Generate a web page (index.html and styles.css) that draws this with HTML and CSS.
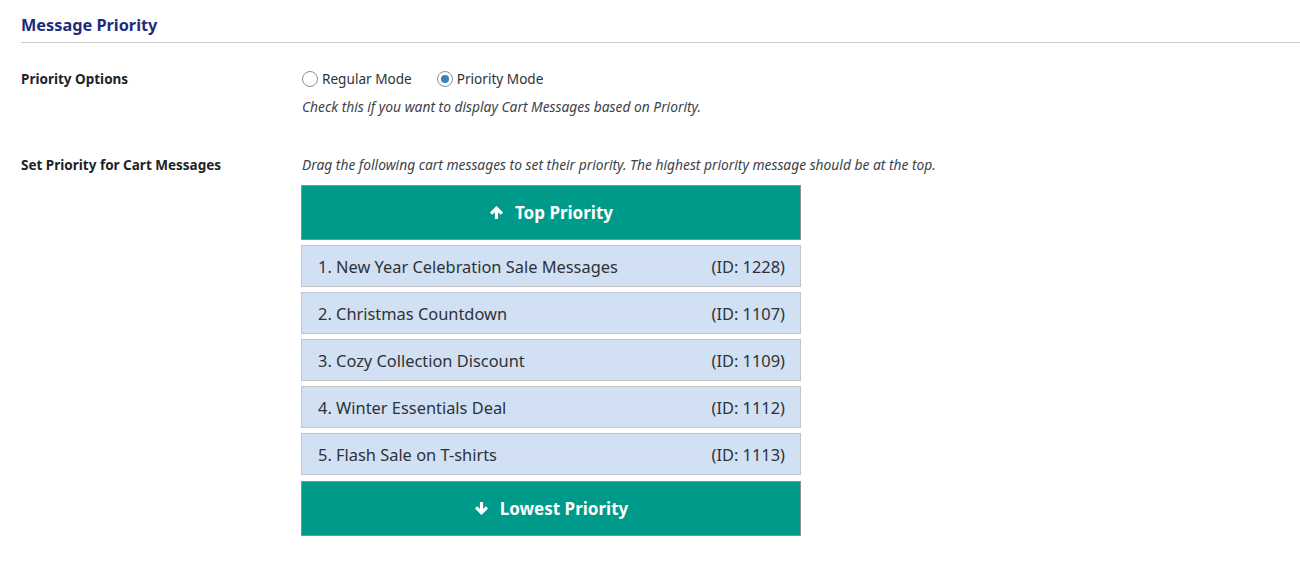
FILE: index.html
```html
<!DOCTYPE html>
<html lang="en">
<head>
    <meta charset="UTF-8">
    <title>Message Priority</title>
    <link rel="stylesheet" href="styles.css">
</head>
<body>
<div class="section">
    <h2 class="section-title">Message Priority</h2>

    <div class="row row-options">
        <div class="row-label">Priority Options</div>
        <div class="row-field">
            <div class="radios">
                <label class="radio"><span class="radio-dot"></span>Regular Mode</label>
                <label class="radio"><span class="radio-dot checked"></span>Priority Mode</label>
            </div>
            <p class="desc desc-options">Check this if you want to display Cart Messages based on Priority.</p>
        </div>
    </div>

    <div class="row row-priority">
        <div class="row-label">Set Priority for Cart Messages</div>
        <div class="row-field">
            <p class="desc">Drag the following cart messages to set their priority. The highest priority message should be at the top.</p>
            <div class="priority-list">
                <div class="priority-end">
                    <svg class="arrow" viewBox="0 0 16 16" width="16" height="16"><path d="M8 1 L15 8 L12.6 10.4 L9.7 7.6 V15 H6.3 V7.6 L3.4 10.4 L1 8 Z" fill="#fff"/></svg>
                    Top Priority
                </div>
                <ul class="items">
                    <li><span>1. New Year Celebration Sale Messages</span><span>(ID: 1228)</span></li>
                    <li><span>2. Christmas Countdown</span><span>(ID: 1107)</span></li>
                    <li><span>3. Cozy Collection Discount</span><span>(ID: 1109)</span></li>
                    <li><span>4. Winter Essentials Deal</span><span>(ID: 1112)</span></li>
                    <li><span>5. Flash Sale on T-shirts</span><span>(ID: 1113)</span></li>
                </ul>
                <div class="priority-end">
                    <svg class="arrow" viewBox="0 0 16 16" width="16" height="16"><path d="M8 15 L15 8 L12.6 5.6 L9.7 8.4 V1 H6.3 V8.4 L3.4 5.6 L1 8 Z" fill="#fff"/></svg>
                    Lowest Priority
                </div>
            </div>
        </div>
    </div>
</div>
</body>
</html>
```

FILE: styles.css
```css
*{
    margin: 0;
    padding: 0;
    box-sizing: border-box;
}
body{
    background: #fff;
    font-family: "Noto Sans", "Open Sans", sans-serif;
    color: #1d2327;
}
.section{
    padding-left: 21px;
}
.section-title{
    font-size: 16.3px;
    font-weight: bold;
    color: #1e2b7c;
    line-height: 24px;
    padding: 13px 0 5px;
    border-bottom: 1px solid #ccc;
}
.row{
    display: flex;
}
.row-label{
    width: 280px;
    font-size: 13.5px;
    font-weight: bold;
    line-height: 20px;
}
.row-field{
    flex: 1;
}
.row-options{
    margin-top: 26px;
}
.row-priority{
    margin-top: 40px;
}
.row-priority .row-label{
    line-height: 18px;
}
.radios{
    display: flex;
    gap: 25px;
    margin-left: 1px;
    font-size: 13.6px;
    line-height: 20px;
    color: #2c3338;
}
.radio{
    display: flex;
    align-items: center;
}
.radio-dot{
    width: 16px;
    height: 16px;
    border: 1px solid #8c8f94;
    border-radius: 50%;
    margin-right: 4px;
    position: relative;
}
.radio-dot.checked::after{
    content: "";
    position: absolute;
    left: 3px;
    top: 3px;
    width: 8px;
    height: 8px;
    border-radius: 50%;
    background: #3582c4;
}
.desc{
    font-size: 13.8px;
    font-style: italic;
    line-height: 18px;
    color: #3c434a;
    margin-left: 1px;
}
.desc-options{
    margin-top: 9px;
}
.priority-list{
    width: 500px;
    margin-top: 11px;
}
.priority-end{
    height: 55px;
    background: #009a8a;
    border: 1px solid #8c8f94;
    color: #fff;
    font-size: 17px;
    font-weight: bold;
    display: flex;
    align-items: center;
    justify-content: center;
    gap: 11px;
}
.arrow{
    width: 15px;
    height: 15px;
}
.items{
    list-style: none;
    padding: 5px 0 1px;
}
.items li{
    height: 42px;
    margin-bottom: 5px;
    background: #d2e0f3;
    border: 1px solid #c3c4c7;
    display: flex;
    align-items: center;
    justify-content: space-between;
    padding: 0 15px 0 16px;
    font-size: 16.4px;
    color: #2c3338;
}
```
